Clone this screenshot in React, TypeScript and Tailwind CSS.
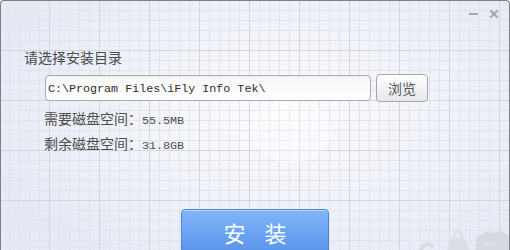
import React from "react";

const cjk = { fontFamily: '"Noto Sans CJK SC", "Liberation Sans", sans-serif' };
const mono = { fontFamily: '"Liberation Mono", "Noto Sans CJK SC", monospace' };

export default function App() {
  return (
    <div className="w-[510px] h-[250px] bg-white overflow-hidden">
      <div
        className="relative w-[510px] h-[250px] overflow-hidden border-t border-l border-r border-[#7f8082] rounded-t-[4px] bg-[#eceff7] [background-image:linear-gradient(to_right,transparent_48px,#d3d6de_48px,#d3d6de_49px,transparent_49px),linear-gradient(to_bottom,transparent_49px,#d3d6de_49px,#d3d6de_50px,transparent_50px),linear-gradient(to_right,transparent_8px,#e1e4eb_8px,#e1e4eb_9px,transparent_9px),linear-gradient(to_bottom,transparent_9px,#e1e4eb_9px,#e1e4eb_10px,transparent_10px),radial-gradient(ellipse_60%_70%_at_55%_45%,#fbfcfe_0%,#f2f4fa_45%,#e6eaf5_100%)] [background-size:50px_50px,50px_50px,10px_10px,10px_10px,100%_100%]"
        style={cjk}
      >
        {/* faint decorative watermark */}
        <svg className="absolute left-0 top-0 pointer-events-none" width="510" height="250" viewBox="0 0 510 250">
          <ellipse cx="290" cy="130" rx="40" ry="32" fill="#ffffff" opacity="0.35" />
          <path d="M418 252 Q424 238 432 246" stroke="#d6dae3" strokeWidth="4" fill="none" />
          <path d="M446 252 L448 240 Q456 234 466 240 L468 252 Z" fill="#d9dde6" />
          <path d="M452 238 L454 232 Q457 229 460 232 L462 238" stroke="#d9dde6" strokeWidth="2" fill="none" />
          <path d="M474 252 L476 236 L486 230 Q494 234 500 230 L510 236 L510 252 Z" fill="#d4d9e2" />
          <text x="483" y="246" fontSize="7" fill="#e7eaf0" fontFamily="Liberation Sans">iFLY</text>
        </svg>

        <div className="relative flex flex-col">
          {/* title bar controls */}
          <div className="h-[46px] flex justify-end items-start pt-[9px] pr-[11px] gap-[12px]">
            <div className="h-[8px] w-[9px] flex items-center">
              <div className="w-[9px] h-[2px] bg-[#a3a5a9]" />
            </div>
            <svg width="8" height="8" viewBox="0 0 8 8">
              <path d="M1 1 L7 7 M7 1 L1 7" stroke="#a3a5a9" strokeWidth="2" strokeLinecap="square" />
            </svg>
          </div>

          {/* heading */}
          <div className="h-[20px] pl-[23px] text-[14px] leading-[20px] text-[#4a4a4a]">请选择安装目录</div>

          {/* path row */}
          <div className="mt-[7px] pl-[44px] flex items-center h-[28px]">
            <div className="w-[326px] h-[26px] rounded-[4px] border border-[#a9acb4] bg-gradient-to-b from-[#f7f7f7] to-white flex items-center pl-[2px] pt-[1px] shadow-[inset_0_1px_1px_rgba(0,0,0,0.05)]">
              <span className="text-[11.7px] leading-[14px] text-[#2e2e2e] whitespace-pre" style={mono}>
                C:\Program Files\iFly Info Tek\
              </span>
            </div>
            <div className="ml-[5px] w-[52px] h-[28px] rounded-[4px] border border-[#a6a8ad] bg-gradient-to-b from-white to-[#e6e7ea] shadow-[inset_0_1px_0_#ffffff] flex items-center justify-center text-[14px] leading-[20px] text-[#555555]">
              浏览
            </div>
          </div>

          {/* space info */}
          <div className="mt-[4px] pl-[43px] text-[14px] leading-[25px] text-[#4d4d4d]">
            <div className="h-[25px] overflow-visible whitespace-nowrap">
              需要磁盘空间：<span className="text-[11.7px] leading-[14px]" style={mono}>55.5MB</span>
            </div>
            <div className="h-[25px] overflow-visible whitespace-nowrap">
              剩余磁盘空间：<span className="text-[11.7px] leading-[14px]" style={mono}>31.8GB</span>
            </div>
          </div>

          {/* install button */}
          <div className="mt-[53px] flex justify-center">
            <div className="w-[148px] h-[48px] shrink-0 rounded-[4px] border border-[#4f87dd] bg-gradient-to-b from-[#80b6f8] to-[#5692ea] shadow-[inset_0_1px_0_rgba(255,255,255,0.45)] flex items-start justify-center pt-[9px] gap-[19px] text-[22px] leading-[26px] text-white">
              <span>安</span>
              <span>装</span>
            </div>
          </div>
        </div>
      </div>
    </div>
  );
}
